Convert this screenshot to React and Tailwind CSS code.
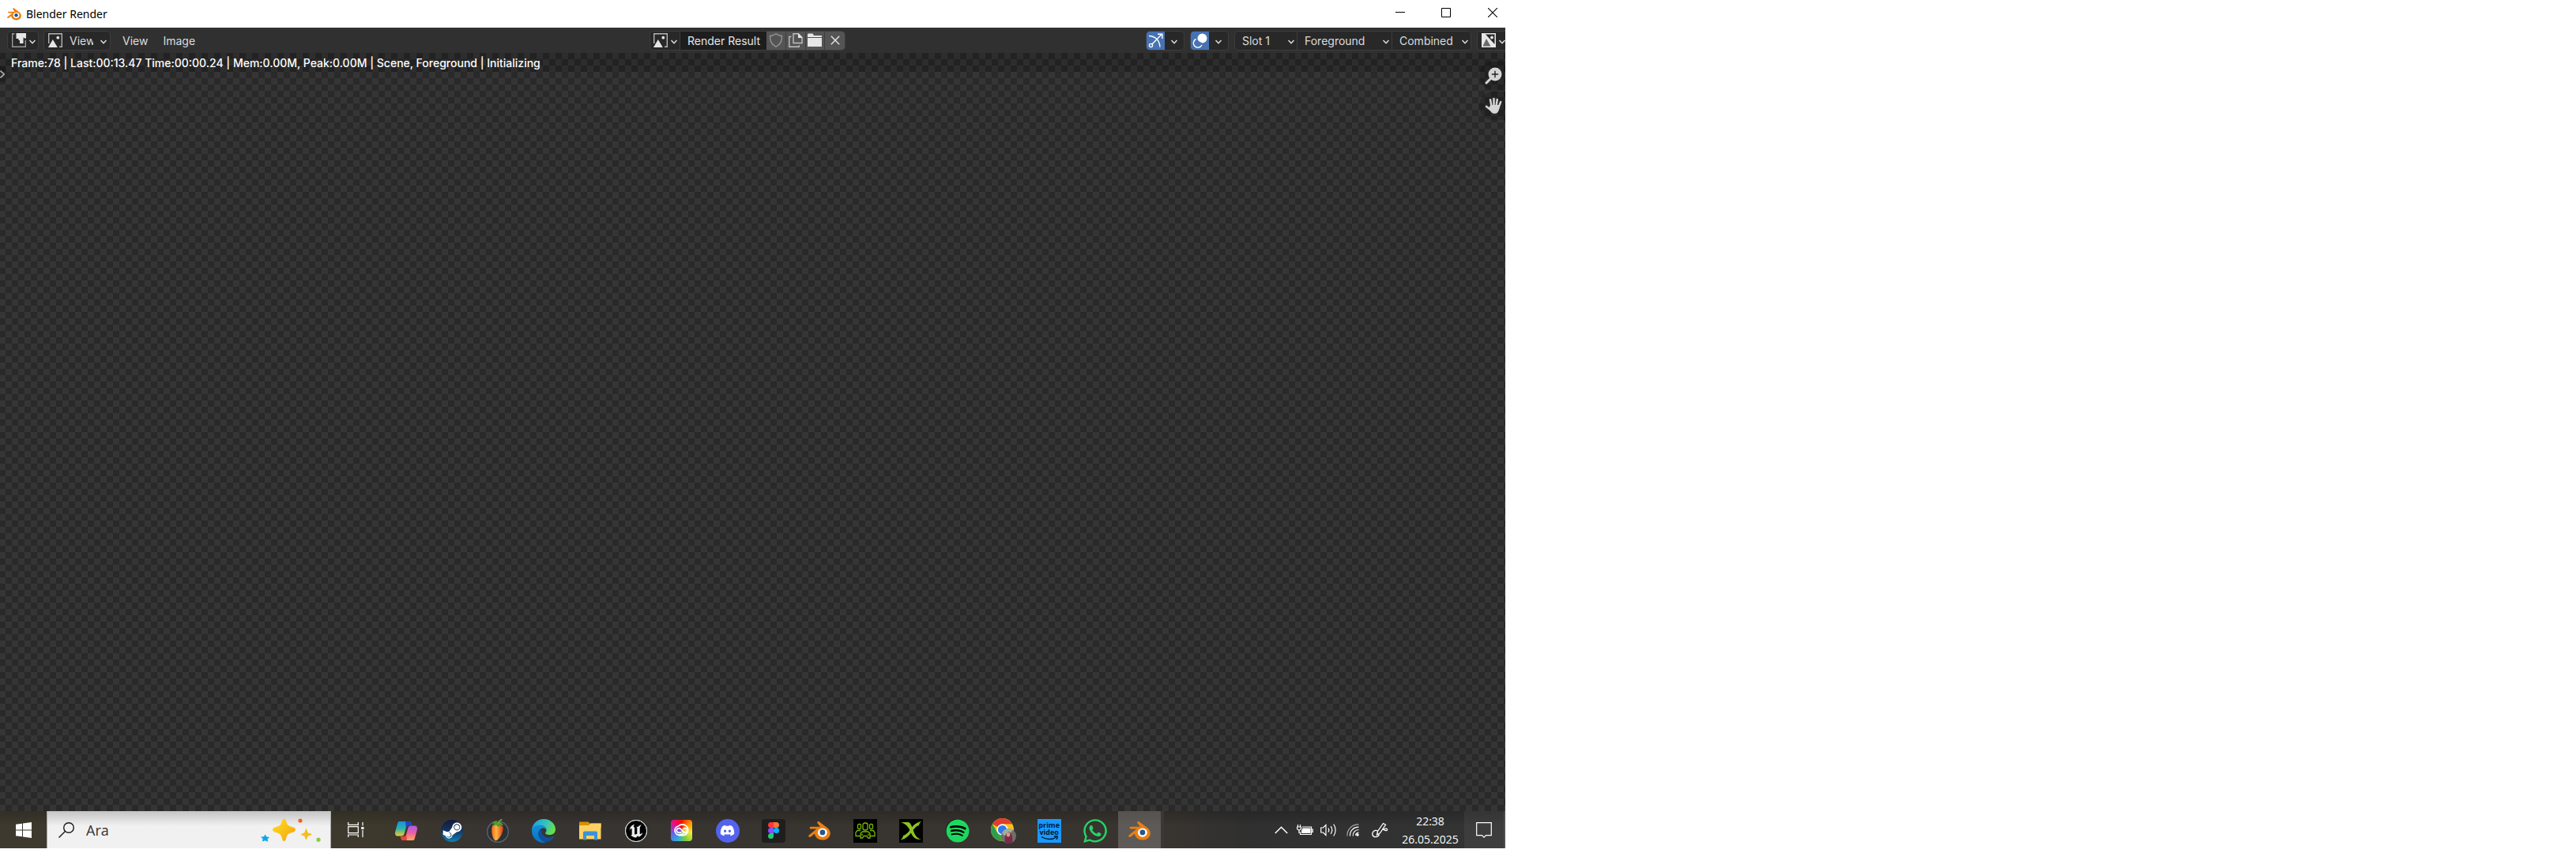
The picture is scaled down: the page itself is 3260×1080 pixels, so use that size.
import { FaDiscord, FaSpotify, FaSteamSymbol, FaWhatsapp } from "react-icons/fa";
import { SiUnrealengine } from "react-icons/si";

const viewOptions = ["View", "Paint", "Mask"];
const slots = ["Slot 1", "Slot 2", "Slot 3"];
const layers = ["Foreground", "Background"];
const passes = ["Combined", "Depth"];

function Chevron({ className = "" }) {
  return (
    <svg viewBox="0 0 8 6" className={`w-2 h-1.5 shrink-0 pointer-events-none ${className}`} fill="none" stroke="#e0e0e0" strokeWidth="1.5">
      <path d="M0.5 1 4 4.7 7.5 1" />
    </svg>
  );
}

function BlenderLogo({ className }) {
  return (
    <svg viewBox="0 0 28 24" className={className}>
      <path
        fill="#ea7f12"
        d="M11.6.5c.7-.6 1.600-.5 2.300 0l9.300 7c3 2 4.600 4.500 4.600 7.500 0 4.900-4.400 8.600-9.900 8.600-5.200 0-9.500-3.300-9.900-8l-4.900 3.900c-.8.700-2 .6-2.500 0-.6-.7-.4-1.700.3-2.300L10.300 9.600H3.500c-1.200 0-1.900-.6-1.900-1.400s.7-1.400 1.900-1.400h11.400l-3.200-4.200C11 1.900 11 1 11.600.5z"
      />
      <ellipse cx="17.900" cy="14.100" rx="6" ry="5.600" fill="#fff" />
      <circle cx="17.900" cy="13.900" r="3.400" fill="#265787" />
    </svg>
  );
}

function EditorIcon() {
  return (
    <svg viewBox="0 0 18 18" className="w-[18px] h-[18px] shrink-0">
      <path d="M3.500.7H.7v16.600h16.600V9" fill="none" stroke="#9a9a9a" strokeWidth="1.400" />
      <path d="M5.500 0H18v6.500h-2.500V5.500h-1V13H10V9H8.500V7h-3z" fill="#e6e6e6" />
    </svg>
  );
}

function ImageIcon() {
  return (
    <svg viewBox="0 0 18 18" className="w-[18px] h-[18px] shrink-0">
      <path d="M.7 13V.7h16.600v16.600H14" fill="none" stroke="#b4b4b4" strokeWidth="1.400" />
      <path d="M0 18 5.800 8 11.800 18z" fill="#e6e6e6" />
      <circle cx="12.300" cy="5.700" r="1.900" fill="#e6e6e6" />
    </svg>
  );
}

function ChannelsIcon() {
  return (
    <svg viewBox="0 0 18 18" className="w-[18px] h-[18px] shrink-0">
      <path d="M0 0h18v18H0z" fill="#e6e6e6" />
      <path d="M5 1.500h11.500V14z" fill="#282828" />
      <path d="M1.500 16.500 6 7l5.500 9.500z" fill="#6a6a6a" />
      <circle cx="13" cy="5.500" r="1.900" fill="#e6e6e6" />
    </svg>
  );
}

function HeaderSelect({ label, options, className, children }) {
  return (
    <label className={`h-full flex items-center ${className}`}>
      {children}
      <select aria-label={label} className="appearance-none bg-transparent flex-1 min-w-0 h-full outline-none">
        {options.map((o) => (
          <option key={o}>{o}</option>
        ))}
      </select>
      <Chevron className="mt-1" />
    </label>
  );
}

function TitleBar() {
  return (
    <div className="h-[35px] shrink-0 bg-white flex items-center text-black">
      <BlenderLogo className="w-[18px] h-4 ml-[9px]" />
      <h1 className="ml-1.5 text-[14px] leading-5 font-['Noto_Sans',sans-serif]">Blender Render</h1>
      <div className="ml-auto flex h-full">
        <button aria-label="Minimize" className="w-[58px] flex items-center justify-center">
          <svg viewBox="0 0 12 12" className="w-3 h-3 -mt-1" stroke="#000"><path d="M0 5.500h12" /></svg>
        </button>
        <button aria-label="Maximize" className="w-[58px] flex items-center justify-center">
          <svg viewBox="0 0 12 12" className="w-3 h-3 -mt-1" fill="none" stroke="#000"><path d="M.5.5h11v11H.5z" /></svg>
        </button>
        <button aria-label="Close" className="w-[46px] pl-[24px] flex items-center">
          <svg viewBox="0 0 12 12" className="w-3 h-3 -mt-1" stroke="#000" strokeWidth="1.100"><path d="M0 0 12 12M12 0 0 12" /></svg>
        </button>
      </div>
    </div>
  );
}

function Header() {
  const box = "h-[25px] flex items-center rounded-[5px] border border-[#3d3d3d] bg-[#282828] overflow-hidden";
  return (
    <header className="h-8 shrink-0 bg-[#303030] flex items-center justify-between pl-[9px] text-[14px] text-[#dcdcdc]">
      <div className="flex-1 flex items-center">
        <button aria-label="Editor type" className={`${box} w-10 pl-[5px]`}>
          <EditorIcon />
          <Chevron className="ml-1 mt-1" />
        </button>
        <div className={`${box} w-[85px] ml-1.5`}>
          <HeaderSelect label="Mode" options={viewOptions} className="w-full pl-[5px] pr-1 gap-[9px]">
            <ImageIcon />
          </HeaderSelect>
        </div>
        <nav className="flex gap-[19px] ml-[15px]">
          <button>View</button>
          <button>Image</button>
        </nav>
      </div>

      {/* Image data block */}
      <div className={`${box} w-[248px] shrink-0 mr-[22px]`}>
        <button aria-label="Browse image" className="flex items-center w-[37px] pl-1 shrink-0">
          <ImageIcon />
          <Chevron className="ml-1 mt-1" />
        </button>
        <input aria-label="Image name" defaultValue="Render Result" className="w-[110px] h-full shrink-0 bg-[#1d1d1d] border-l border-[#3d3d3d] pl-[9px] text-[#e6e6e6] outline-none" />
        <div className="flex-1 h-full grid grid-cols-4 divide-x divide-[#3d3d3d] bg-[#545454]">
          <button aria-label="Fake user" className="flex items-center justify-center">
            <svg viewBox="0 0 18 18" className="w-[18px] h-[18px]" fill="none" stroke="#989898" strokeWidth="1.300">
              <path d="M9 .8c2.300 1.700 4.500 2.500 7.500 2.700 0 6-.8 9.800-7.500 13.700C2.300 13.300 1.500 9.500 1.500 3.500 4.500 3.300 6.700 2.500 9 .8z" />
            </svg>
          </button>
          <button aria-label="New image" className="flex items-center justify-center">
            <svg viewBox="0 0 18 18" className="w-[18px] h-[18px]" fill="none" stroke="#c0c0c0" strokeWidth="1.400">
              <path d="M6 .7h6.500L17 5.500v7H6zM3.500 4.500H.8v12.700h12.400v-2" />
              <path d="M12 0v6h6z" fill="#e6e6e6" stroke="none" />
            </svg>
          </button>
          <button aria-label="Open image" className="flex items-center justify-center">
            <svg viewBox="0 0 18 18" className="w-[18px] h-[18px]" fill="#e6e6e6">
              <path d="M0 5V1.500L1 .5h5.500L8 3h10v2zM0 6h18v11H0z" />
            </svg>
          </button>
          <button aria-label="Unlink image" className="flex items-center justify-center">
            <svg viewBox="0 0 12 12" className="w-3 h-3" stroke="#e6e6e6" strokeWidth="1.400"><path d="M.8.8 11.200 11.200M11.200.8.8 11.200" /></svg>
          </button>
        </div>
      </div>

      <div className="flex-1 flex items-center justify-end">
        <div className={`${box} w-[49px]`}>
          <button aria-label="Gizmos" aria-pressed="true" className="w-[23px] h-full bg-[#4772b3] flex items-center justify-center">
            <svg viewBox="0 0 19 19" className="w-[19px] h-[19px]" fill="none" stroke="#fff" strokeWidth="1.400">
              <path d="M1 3.500C8.500 3.500 14.500 9 15 17.500M4.500 14.500 17 1.500M12 1.200h5.800V7" />
              <circle cx="3.500" cy="15.500" r="2.100" />
            </svg>
          </button>
          <button aria-label="Gizmo options" className="flex-1 h-full flex items-center justify-center"><Chevron className="mt-1" /></button>
        </div>
        <div className={`${box} w-[49px] ml-[7px]`}>
          <button aria-label="Overlays" aria-pressed="true" className="w-[23px] h-full bg-[#4772b3] flex items-center justify-center">
            <svg viewBox="0 0 19 19" className="w-[19px] h-[19px]" fill="none" stroke="#fff" strokeWidth="1.400">
              <circle cx="12.500" cy="6.500" r="6" fill="#fff" stroke="none" />
              <path d="M4.500 7.500A5.600 5.600 0 1 0 12 15" />
              <path d="M7 9.500c1.500 1.500 2.500 2.300 4.500 2.500" stroke="#4772b3" strokeWidth="1" />
            </svg>
          </button>
          <button aria-label="Overlay options" className="flex-1 h-full flex items-center justify-center"><Chevron className="mt-1" /></button>
        </div>
        <div className={`${box} ml-[7px] divide-x divide-[#3d3d3d]`}>
          <HeaderSelect label="Slot" options={slots} className="w-[79px] pl-[9px] pr-[3px]" />
          <HeaderSelect label="Layer" options={layers} className="w-[120px] pl-[9px] pr-[3px]" />
          <HeaderSelect label="Pass" options={passes} className="w-[99px] pl-[9px] pr-[3px]" />
        </div>
        <button aria-label="Display channels" className={`${box} w-9 ml-[7px] pl-[5px] rounded-r-none border-r-0`}>
          <ChannelsIcon />
          <Chevron className="ml-1 mt-1" />
        </button>
      </div>
    </header>
  );
}

function Viewport() {
  return (
    <main className="relative flex-1 bg-[repeating-conic-gradient(#353535_0_25%,#292929_0_50%)] bg-[size:16px_16px] bg-[position:-1px_0]">
      <p className="h-6 pl-3.5 bg-black/15 text-white text-[14px] leading-[26px] font-medium whitespace-nowrap">
        Frame:78 | Last:00:13.47 Time:00:00.24 | Mem:0.00M, Peak:0.00M | Scene, Foreground | Initializing
      </p>
      <button aria-label="Show toolbar" className="absolute left-0 top-[17px] w-2 h-5 rounded-r bg-black/20 flex items-center">
        <svg viewBox="0 0 7 10" className="w-[7px] h-2.5" fill="none" stroke="#b0b0b0" strokeWidth="1.600"><path d="M.5.5 5.200 5 .5 9.500" /></svg>
      </button>
      <div className="absolute right-0 top-[11px] flex flex-col gap-0.5 overflow-hidden">
        <button aria-label="Zoom" className="w-[33px] h-9 pl-[7px] rounded-l-full bg-black/20 flex items-center">
          <svg viewBox="0 0 22 22" className="w-[22px] h-[22px] shrink-0">
            <path d="M2 20 8.500 13.500" stroke="#d4d4d4" strokeWidth="3" strokeLinecap="round" />
            <circle cx="13" cy="9" r="8.500" fill="#d4d4d4" />
            <path d="M13 4.800v8.400M8.800 9h8.400" stroke="#222" strokeWidth="1.400" />
          </svg>
        </button>
        <button aria-label="Pan" className="w-[33px] h-9 pl-[7px] rounded-l-full bg-black/20 flex items-center">
          <svg viewBox="0 0 22 22" className="w-[22px] h-[22px] shrink-0" fill="none" stroke="#d4d4d4" strokeWidth="2.500" strokeLinecap="round">
            <path d="M8.500 11 7 3.200M11.500 10V2M14.500 11l1.300-8M17.500 13l2.700-7M8 16.500 2 11.800" />
            <path d="M7.300 10h11.500c0 3-.6 7-2.500 9.300-1.700 2-5.600 2-7.600.2L4.500 14.500z" fill="#d4d4d4" stroke="none" />
          </svg>
        </button>
      </div>
    </main>
  );
}

function CopilotIcon() {
  return (
    <svg viewBox="0 0 28 26" className="w-7 h-[26px]">
      <defs>
        <linearGradient id="cpA" x1="0" y1="0" x2="0" y2="1">
          <stop offset="0" stopColor="#1a8fe8" />
          <stop offset=".5" stopColor="#2cb5a8" />
          <stop offset="1" stopColor="#f2c92e" />
        </linearGradient>
        <linearGradient id="cpB" x1="0" y1="0" x2="0" y2="1">
          <stop offset="0" stopColor="#a95bea" />
          <stop offset=".5" stopColor="#ee5fa2" />
          <stop offset="1" stopColor="#ffab5c" />
        </linearGradient>
      </defs>
      <path d="M5.500 1h12c2.500 0 2.700 1.500 3.500 5h-4c-2 0-2.600.8-3.200 3l-2.300 8c-.6 1.700-1.500 2.500-3.500 2.500H3c-3 0-3.500-3-2.500-6.500L3 4c.5-2 1-3 2.500-3z" fill="url(#cpA)" />
      <path d="M22.500 25h-12c-2.500 0-2.700-1.500-3.500-5h4c2 0 2.600-.8 3.200-3l2.300-8c.6-1.700 1.500-2.500 3.500-2.500h5c3 0 3.500 3 2.500 6.500L25 22c-.5 2-1 3-2.500 3z" fill="url(#cpB)" />
      <path d="M13 1h4.500c2.500 0 2.700 1.500 3.500 5h-4c-2 0-2.600.8-3.200 3z" fill="#1b49c4" />
      <path d="M15 25h-4.500c-2.500 0-2.700-1.500-3.500-5h4c2 0 2.600-.8 3.200-3z" fill="#e8453c" />
    </svg>
  );
}

function SteamIcon() {
  return (
    <div className="w-7 h-7 rounded-full bg-gradient-to-b from-[#14173a] via-[#123763] to-[#1080b5] flex items-center justify-center overflow-hidden">
      <FaSteamSymbol size={27} className="text-white" />
    </div>
  );
}

function FruityIcon() {
  return (
    <svg viewBox="0 0 30 30" className="w-[30px] h-[30px]">
      <defs>
        <linearGradient id="fl" x1="0" y1="0" x2="1" y2="0">
          <stop offset="0" stopColor="#f4661a" />
          <stop offset=".4" stopColor="#ffb347" />
          <stop offset="1" stopColor="#d9400b" />
        </linearGradient>
      </defs>
      <circle cx="15" cy="16" r="13.300" fill="#2b3034" stroke="#56616a" strokeWidth="1.500" />
      <path d="M8 9c3-3 10.500-2.500 13.500 1 1.500 4.500-4 16-9 17.500C8 26.500 6 14 8 9z" fill="url(#fl)" />
      <path d="M7.500 6c3-4 6-4 7.500-1.500C17 3 19.500 3 22 8c-2 1-3-1-4.500-1 0 3-1 4-3 2-1-1-1.500-2-3-1S9 10 8 9s1-2 3-3c-1.500-.5-2.500 0-3.500 0z" fill="#559a2a" />
      <path d="M15.500 6c.8-3 2.500-5 5-5.500" stroke="#78b63c" strokeWidth="1.300" fill="none" />
    </svg>
  );
}

function EdgeIcon() {
  return (
    <svg viewBox="0 0 30 30" className="w-[30px] h-[30px]">
      <defs>
        <linearGradient id="edA" x1="0" y1=".2" x2="1" y2=".5">
          <stop offset="0" stopColor="#1b9de2" />
          <stop offset=".55" stopColor="#33c3c0" />
          <stop offset="1" stopColor="#68e045" />
        </linearGradient>
        <linearGradient id="edB" x1="0" y1="0" x2="0" y2="1">
          <stop offset="0" stopColor="#1190dc" />
          <stop offset="1" stopColor="#0b6fc4" />
        </linearGradient>
      </defs>
      <path d="M0 14C.5 6 7 0 15 0c9 0 15 6.500 15 13 0 4.500-3.400 7-7.500 7-4 0-5.300-1.300-5.300-2.300 0-.9 1.300-1.500 1.300-3.700C18.500 10.500 15 8 10.500 8 5 8 1 11.500 0 14z" fill="url(#edA)" />
      <path d="M0 15C0 10.500 4.500 7.500 10 7.500c5.500 0 8.500 3.500 8.500 6.500-.5-1.300-2-2.500-4-2.500-3.500 0-6 3-6 7 0 5 4.500 10 10 11C8 32 0 24 0 15z" fill="url(#edB)" />
      <path d="M13 12c-5 3-6 8-3 12.500 3 4.300 8 5.500 11.500 4 3-1.200 5.500-3.500 6.500-5.500.5-1-.3-1.300-1-.9-4.500 2.300-9.800 1.300-12.500-1.600-2.700-3-2.700-6.500-1.500-8.500z" fill="#104f9e" />
    </svg>
  );
}

function FolderIcon() {
  return (
    <svg viewBox="0 0 28 24" className="w-7 h-6">
      <path d="M0 1.500C0 .7.500.5 1 .5h10c1.500 0 1.500 2 3 2h14V8H0z" fill="#d98f04" />
      <path d="M0 5h11.500c1.500 0 2-2.500 3.500-2.500h12.500v20H0z" fill="#fbd264" />
      <path d="M5 23.500V14.500c0-1.200.8-2 2-2h14c1.200 0 2 .8 2 2v9h-4V18H9v5.500z" fill="#3a93dc" />
    </svg>
  );
}

function UnrealIcon() {
  return (
    <div className="w-7 h-7 rounded-full bg-black border border-[#dcdcdc] flex items-center justify-center">
      <SiUnrealengine size={28} className="text-[#ececec] shrink-0" />
    </div>
  );
}

function CreativeCloudIcon() {
  return (
    <div className="w-[27px] h-[27px] rounded bg-[conic-gradient(from_0deg,#f40f02,#ff9a00,#f6e93b,#7dd03f,#30a8e0,#6a5ce8,#e5108f,#f40f02)] flex items-center justify-center">
      <svg viewBox="0 0 22 18" className="w-[21px] h-[17px]" fill="none" stroke="#fff" strokeWidth="1.800" strokeLinecap="round">
        <path d="M13.500 12.800c-1 1-2.700 2.200-5.500 2.200a6 6 0 0 1-1.500-11.800C8 1.800 10 1 12.500 1a7.300 7.300 0 0 1 1 14.500H8" />
        <path d="M10.500 11.500C9.500 12.300 6.500 12.300 5.200 11 3.500 9.300 4.500 6 7.500 6c2.500 0 4 2.500 6 5 1.700 1.800 4.800 1 5-1.700.2-2.800-3-4.300-5-2.600" />
      </svg>
    </div>
  );
}

function DiscordIcon() {
  return (
    <div className="w-[30px] h-[30px] rounded-full bg-[#5462f0] flex items-center justify-center">
      <FaDiscord size={19} className="text-white" />
    </div>
  );
}

function FigmaIcon() {
  return (
    <div className="w-[30px] h-[30px] rounded bg-[#1e1e1e] flex items-center justify-center">
      <svg viewBox="0 0 14 21" className="w-3.5 h-[21px]">
        <path d="M3.500 0H7v7H3.500a3.500 3.500 0 0 1 0-7z" fill="#ff3737" />
        <path d="M7 0h3.500a3.500 3.500 0 0 1 0 7H7z" fill="#ff7237" />
        <path d="M3.500 7H7v7H3.500a3.500 3.500 0 0 1 0-7z" fill="#874fff" />
        <circle cx="10.500" cy="10.500" r="3.500" fill="#00b6ff" />
        <path d="M3.500 14H7v3.500A3.500 3.500 0 1 1 3.500 14z" fill="#24cb71" />
      </svg>
    </div>
  );
}

function CrowdIcon() {
  return (
    <div className="w-[30px] h-[30px] bg-black flex items-center justify-center">
      <svg viewBox="0 0 26 22" className="w-[26px] h-[22px]" fill="none" stroke="#76b900" strokeWidth="1.300">
        <rect x="10" y="1" width="6" height="9" rx="2.500" />
        <rect x="3.500" y="2.500" width="4" height="6" rx="1.500" />
        <rect x="18.500" y="2.500" width="4" height="6" rx="1.500" />
        <path d="M7 17.500H1V13l2-2.500h4M19 17.500h6V13l-2-2.500h-4M7 20v-6l2.500-2h7l2.500 2v6h-2.500l-1.500-2.500H11L9.500 20zM9 14.500V17M17 14.500V17" />
      </svg>
    </div>
  );
}

function XIcon() {
  return (
    <div className="w-[30px] h-[30px] bg-black flex items-center justify-center">
      <svg viewBox="0 0 28 24" className="w-7 h-6" fill="#8cc321">
        <path d="M1 1h9c3 0 4.500 4 6.500 9.500C18.500 17 21 21 27 23c-8 0-11-3-13.500-9.500C11 7 7 3 1 1z" />
        <path d="M27 0c-2 2-3 3-3 5-4 1-6 4-9 8-3.500 5-7 9-14.500 10.500 2-1.500 3-3 3.500-5.500 4-1 7-5 9.500-8.500C17 4.500 21 1 27 0z" />
      </svg>
    </div>
  );
}

function SpotifyIcon() {
  return (
    <div className="w-[29px] h-[29px] rounded-full bg-black">
      <FaSpotify size={30} className="text-[#1ed760]" />
    </div>
  );
}

function ChromeIcon() {
  return (
    <svg viewBox="0 0 32 32" className="w-8 h-8">
      <circle cx="14.500" cy="14.500" r="14.500" fill="#fbc116" />
      <path d="M14.500 14.500 1.900 7.300A14.500 14.500 0 0 1 27 7.300H14.500z" fill="#e33b2e" />
      <path d="M1.900 7.300 8.300 18.100 14.500 29A14.500 14.500 0 0 1 1.900 7.300z" fill="#2f9e4c" />
      <path d="M14.500 14.500 20.700 18 14.500 29 8.300 18z" fill="#2f9e4c" />
      <circle cx="14.500" cy="14.500" r="7.200" fill="#fff" />
      <circle cx="14.500" cy="14.500" r="5.600" fill="#2f7bea" />
      <circle cx="22.500" cy="22.500" r="9.500" fill="#6f6f68" />
      <path d="M14 19a9.500 9.500 0 0 1 14-4.500L24 20l-7 2z" fill="#9db0a0" />
      <path d="M18 31c-1-6 0-12 4.500-14 4 1.500 5.500 7 4.500 14-3 1.300-6 1.300-9 0z" fill="#7d2947" />
      <ellipse cx="22" cy="20.500" rx="2.300" ry="3" fill="#cf9c8e" />
    </svg>
  );
}

function PrimeIcon() {
  return (
    <div className="w-[30px] h-[30px] bg-[#1a98ff] text-[#001b33] text-[9px] leading-[9px] font-bold text-center pt-[3px] font-['Open_Sans',sans-serif]">
      <div>prime</div>
      <div>video</div>
      <svg viewBox="0 0 22 6" className="w-[22px] h-1.5 mx-auto" fill="none" stroke="#001b33" strokeWidth="1.500">
        <path d="M1 1.500c6 4 14 4 18.500.5M17 .8h4c.3 1.500 0 2.700-1 4" />
      </svg>
    </div>
  );
}

function WhatsappIcon() {
  return <FaWhatsapp size={34} className="text-[#25d366]" />;
}

function BlenderIcon() {
  return <BlenderLogo className="w-7 h-6" />;
}

const apps = [
  { name: "Copilot", icon: CopilotIcon },
  { name: "Steam", icon: SteamIcon },
  { name: "FL Studio", icon: FruityIcon },
  { name: "Edge", icon: EdgeIcon },
  { name: "File Explorer", icon: FolderIcon },
  { name: "Unreal Engine", icon: UnrealIcon },
  { name: "Creative Cloud", icon: CreativeCloudIcon },
  { name: "Discord", icon: DiscordIcon },
  { name: "Figma", icon: FigmaIcon },
  { name: "Blender", icon: BlenderIcon },
  { name: "Crowd", icon: CrowdIcon },
  { name: "X", icon: XIcon },
  { name: "Spotify", icon: SpotifyIcon },
  { name: "Chrome", icon: ChromeIcon },
  { name: "Prime Video", icon: PrimeIcon },
  { name: "WhatsApp", icon: WhatsappIcon },
  { name: "Blender Render", icon: BlenderIcon, active: true },
];

function Taskbar() {
  return (
    <footer className="h-[47px] shrink-0 flex bg-[linear-gradient(to_bottom,#00000030,transparent_40%),linear-gradient(to_right,#3d392e,#3d392c_25%,#383431_32%,#38342f_60%,#383430_78%,#2f302f_83%,#323332)] font-['Noto_Sans',sans-serif]">
      <button aria-label="Start" className="w-[59px] shrink-0 flex items-center justify-center">
        <svg viewBox="0 0 20 20" className="w-5 h-5" fill="#fff">
          <path d="M0 2.800 8 1.700v7.800H0zM9 1.500 20 0v9.500H9zM0 10.500h8v7.800l-8-1.100zM9 10.500h11V20L9 18.500z" />
        </svg>
      </button>
      <label className="w-[360px] shrink-0 flex items-center bg-gradient-to-b from-[#c4c4c4] to-[#f1f1f1] to-40% border-x border-[#a8a8a8]">
        <svg viewBox="0 0 20 20" className="w-5 h-5 ml-3.5 shrink-0" fill="none" stroke="#1b1b1b" strokeWidth="1.400">
          <circle cx="13" cy="7" r="6.300" />
          <path d="M8.500 11.500.5 19.500" />
        </svg>
        <input aria-label="Ara" placeholder="Ara" className="flex-1 min-w-0 ml-[15px] pt-0.5 bg-transparent outline-none text-[18px] text-[#333] placeholder:text-[#333] font-['Open_Sans',sans-serif]" />
        <svg viewBox="0 0 76 30" className="w-[76px] h-[30px] shrink-0 mr-3">
          <defs>
            <linearGradient id="spark" x1="0" y1="0" x2="1" y2="1">
              <stop offset=".2" stopColor="#ffd21f" />
              <stop offset="1" stopColor="#f3a30c" />
            </linearGradient>
          </defs>
          <path d="M29.500.5c1.500 0 2 1 2.700 3.500 1.300 4.500 2.300 5.500 6.800 6.800 3.500 1 5 1.500 5 3.700s-1.500 2.700-5 3.700c-4.500 1.300-5.500 2.300-6.800 6.800-.7 2.500-1.200 4-2.700 4s-2-1.500-2.700-4c-1.300-4.500-2.300-5.500-6.800-6.800-3.500-1-5-1.500-5-3.700s1.500-2.700 5-3.700c4.500-1.300 5.500-2.300 6.800-6.800.7-2.500 1.200-3.500 2.700-3.500z" fill="url(#spark)" />
          <path d="M57.500 13c.8 0 1.500 4.500 2.200 5.300s4.800 1.200 4.800 2.200-4 1.500-4.800 2.200-1.400 4.300-2.200 4.300-1.500-3.500-2.200-4.300S51 21.500 51 20.500s3.600-1.500 4.300-2.200S56.700 13 57.500 13z" fill="#f8bd1c" />
          <path d="m5.500 20.500 2 3 3.500.5-2.500 2.500.8 3.300-3.800-1.600-3.500 1.200.5-3.400L0 23.500l4-.3z" fill="#0ba8ea" />
          <circle cx="50" cy="3" r="2.600" fill="#ed6321" />
          <circle cx="73" cy="27.200" r="2.600" fill="#8ecb3c" />
        </svg>
      </label>
      <button aria-label="Task view" className="w-[66px] pr-1 shrink-0 flex items-center justify-center">
        <svg viewBox="0 0 21 19" className="w-[21px] h-[19px]" fill="none" stroke="#fff" strokeWidth="1.200">
          <path d="M.7 0v3.300h12.600V0M.7 5.700h12.600v8H.7zM.7 19v-3h12.600v3M19 0v4.500M19 10v9" />
          <path d="M17.200 6h3.300v3h-3.300z" fill="#fff" stroke="none" />
        </svg>
      </button>
      <div className="w-[988px] shrink-0 grid grid-cols-17">
        {apps.map(({ name, icon: Icon, active }) => (
          <button
            key={name}
            aria-label={name}
            className={`flex items-center justify-center pt-0.5 ${active ? "bg-[#ffffff30] border-r-4 border-[#3a3836]" : ""}`}
          >
            <Icon />
          </button>
        ))}
      </div>

      {/* Tray */}
      <div className="ml-auto flex items-center text-white">
        <button aria-label="Show hidden icons" className="mr-[11px]">
          <svg viewBox="0 0 17 10" className="w-[17px] h-2.5" fill="none" stroke="#fff" strokeWidth="1.500"><path d="M.8 9 8.500 1.200 16.200 9" /></svg>
        </button>
        <button aria-label="Battery" className="mr-[9px]">
          <svg viewBox="0 0 21 14" className="w-[21px] h-3.5" fill="none" stroke="#fff" strokeWidth="1.200">
            <path d="M7 3h11.500v9.500H4.500V9M19 6h1.300v3.500H19" />
            <path d="M7.500 4.500h10V11H6V7.500z" fill="#fff" stroke="none" />
            <path d="M1.500 0v3M4.500 0v3M.5 3h5v2.500L3 7.500.5 5.500zM3 7.500V11" />
          </svg>
        </button>
        <button aria-label="Volume" className="mr-3">
          <svg viewBox="0 0 21 18" className="w-[21px] h-[18px]" fill="none" stroke="#fff" strokeWidth="1.200">
            <path d="M.7 6h2.800L7 2.500v13L3.500 12H.7zM10 6.500c1 1.500 1 3.500 0 5M13.200 4.200c2 3 2 6.600 0 9.600M16.700 1.500c3.200 4.500 3.200 10.500 0 15" />
          </svg>
        </button>
        <button aria-label="Network" className="mr-4">
          <svg viewBox="0 0 16 16" className="w-4 h-4" fill="none" stroke="#fff" strokeWidth="1.200">
            <path d="M12 14.800c-1-1 .5-3.500 3.500-3.600M8.200 15.500C7.800 11 11 7.500 15.500 7.500M4.500 15.500C4 9 9 4 15.500 4.200" />
            <path d="M1 15.500C.5 7 7.500.5 15.500 1" stroke="#aaa" />
            <circle cx="14" cy="14" r="1.700" fill="#fff" stroke="none" />
          </svg>
        </button>
        <button aria-label="Windows Ink" className="mr-[17px]">
          <svg viewBox="0 0 21 20" className="w-[21px] h-5" fill="none" stroke="#fff" strokeWidth="1.300">
            <path d="m6.500 16 1-4.500L14.500 1.500l3 1.800-7 10.500zM14 9.500c3-2.300 6-1.500 5.500.3-.4 1.400-3 .8-4.500-.5M7.500 11c-4-2-7.500 1.500-6.500 5 1 3.800 7 3.500 8.500-.5" />
          </svg>
        </button>
        <button className="w-[72px] mr-[7px] text-[14px] leading-[23px] text-center font-['Open_Sans',sans-serif]">
          <div>22:38</div>
          <div>26.05.2025</div>
        </button>
        <button aria-label="Notifications" className="w-[52px] h-full pl-[15px] bg-white/5 border-r-2 border-white/10">
          <svg viewBox="0 0 20 20" className="w-5 h-5" fill="none" stroke="#fff" strokeWidth="1.200">
            <path d="M.7.700h18.600v16h-6.800L10 19.200l-2.500-2.500H.7z" />
          </svg>
        </button>
      </div>
    </footer>
  );
}

export default function App() {
  return (
    <div className="min-h-screen bg-white pb-1.5 flex flex-col">
      <div className="w-full max-w-[1905px] flex-1 flex flex-col overflow-hidden font-['Inter',sans-serif]">
        <TitleBar />
        <Header />
        <Viewport />
        <Taskbar />
      </div>
    </div>
  );
}
